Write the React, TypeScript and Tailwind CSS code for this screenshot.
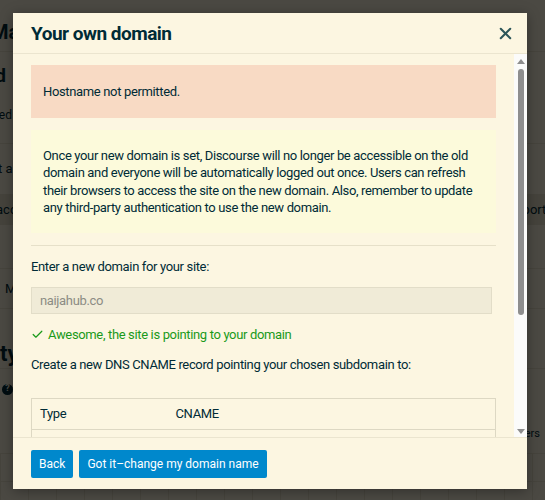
import { X, Check } from "lucide-react";

function Backdrop() {
  return (
    <div className="flex flex-col text-[#002b36] font-['Roboto',sans-serif] whitespace-nowrap">
      <div className="h-[13px]" />
      <div className="h-[39px] flex items-center border-b border-[#e9e3cc]">
        <span className="ml-[-9px] text-[20px] font-bold">Manage your site</span>
      </div>
      <div className="h-[48px] flex items-center">
        <div className="w-[6px] flex justify-end text-[19px] font-bold">
          <span>Dashboard</span>
        </div>
      </div>
      <div className="h-[44px] flex items-center pb-[14px] border-b border-[#e9e3cc]">
        <div className="w-[12px] flex justify-end text-[12px]">
          <span>Customized</span>
        </div>
      </div>
      <div className="h-[50px] flex items-center">
        <span className="ml-[-9px] text-[13px]">at a glance</span>
      </div>
      <div className="h-[31px] flex items-center justify-between bg-[#e6e0c9] text-[13px]">
        <span className="ml-[-4px]">accounts</span>
        <span className="mr-[-8px]">Reports</span>
      </div>
      <div className="h-[44px] border-b border-[#e9e3cc]" />
      <div className="h-[40px] flex items-center border-b border-[#e9e3cc]">
        <span className="ml-[5px] text-[13px]">Members</span>
      </div>
      <div className="h-[30px]" />
      <div className="h-[30px] flex items-center border-b border-[#e9e3cc] text-[22px] font-bold">
        <div className="w-0 flex justify-end">
          <span>Activi</span>
        </div>
        <span>ty</span>
      </div>
      <div className="h-[40px] flex items-center">
        <span className="ml-[2px] w-[11px] h-[11px] rounded-full bg-[#002b36] text-[#fcf6e1] text-[9px] font-bold flex items-center justify-center">
          ?
        </span>
      </div>
      <div className="h-[44px] flex items-center justify-end pt-[6px] text-[11px]">
        <span className="mr-[5px]">Users</span>
      </div>
      <div className="flex-1 grid grid-cols-[repeat(20,28px)] border-t border-[#e9e3cc]">
        {Array.from({ length: 40 }).map((_, i) => (
          <div key={i} className="h-[28px] border-l border-b border-[#e9e3cc]" />
        ))}
      </div>
    </div>
  );
}

function Scrollbar() {
  return (
    <div className="w-[13px] shrink-0 flex flex-col items-center bg-[#fbfbfa] pt-[5px] pb-[3px]">
      <svg width="8" height="5" viewBox="0 0 8 5">
        <path d="M0 5 L4 0 L8 5 Z" fill="#8e8e8e" />
      </svg>
      <div className="mt-[5px] w-[6px] h-[246px] rounded-[3px] bg-[#8e8e8e]" />
      <div className="flex-1" />
      <svg width="8" height="5" viewBox="0 0 8 5">
        <path d="M0 0 L8 0 L4 5 Z" fill="#8e8e8e" />
      </svg>
    </div>
  );
}

export default function App() {
  return (
    <div className="relative w-[545px] h-[500px] overflow-hidden bg-[#fcf6e1] font-['Roboto',sans-serif]">
      <Backdrop />

      {/* Overlay */}
      <div className="absolute inset-0 bg-black/70 pt-[13px] pl-[13px]">
        <div className="w-[514px] h-[476px] flex flex-col bg-[#fcf6e1] shadow-[0_2px_12px_rgba(0,0,0,0.35)] text-[#002b36]">
          {/* Header */}
          <div className="h-[41px] shrink-0 flex items-center justify-between pl-[18px] pr-[12px] border-b border-[#ebe5cf]">
            <h3 className="text-[19px] font-bold leading-none tracking-[-0.5px]">Your own domain</h3>
            <X size={19} strokeWidth={2.6} className="text-[#2c5659]" />
          </div>

          {/* Body */}
          <div className="flex-1 min-h-0 flex">
            <div className="flex-1 overflow-hidden pl-[18px] pr-[18px] pt-[11px] text-[13px] leading-[17.5px] tracking-[-0.35px]">
              <div className="bg-[#f8dac4] pl-3 pt-[18px] pb-[17px]">Hostname not permitted.</div>

              <div className="mt-3 bg-[#fcfadb] px-3 pt-[17px] pb-[16px]">
                Once your new domain is set, Discourse will no longer be accessible on the old domain and
                everyone will be automatically logged out once. Users can refresh their browsers to access
                the site on the new domain. Also, remember to update any third-party authentication to use
                the new domain.
              </div>

              <div className="mt-3 border-t border-[#e6e0c9]" />

              <p className="mt-[12px]">Enter a new domain for your site:</p>
              <div className="mt-3 w-[461px] h-[27px] flex items-center px-2 bg-[#f0ebd7] border border-[#e2ddc8] text-[#8c8c84]">
                naijahub.co
              </div>

              <p className="mt-3 flex items-center gap-1 text-[#1a9a1a]">
                <Check size={13} strokeWidth={2.2} />
                Awesome, the site is pointing to your domain
              </p>

              <p className="mt-[12px]">Create a new DNS CNAME record pointing your chosen subdomain to:</p>

              <table className="mt-[25px] w-full border border-[#ddd8c3] border-collapse">
                <tbody>
                  <tr className="h-[31px] border-b border-[#ddd8c3]">
                    <td className="w-[136px] pl-2">Type</td>
                    <td className="pl-2">CNAME</td>
                  </tr>
                  <tr className="h-[31px] border-b border-[#ddd8c3]">
                    <td className="pl-2">Name</td>
                    <td className="pl-2">www</td>
                  </tr>
                </tbody>
              </table>
            </div>
            <Scrollbar />
          </div>

          {/* Footer */}
          <div className="h-[52px] shrink-0 flex items-start gap-[6px] pl-[18px] pt-[12px] border-t border-[#ebe5cf]">
            <button className="h-[28px] px-[8px] rounded-[2px] bg-[#0088cc] text-white text-[12px]">Back</button>
            <button className="h-[28px] px-[8px] rounded-[2px] bg-[#0088cc] text-white text-[12px]">
              Got it–change my domain name
            </button>
          </div>
        </div>
      </div>
    </div>
  );
}
